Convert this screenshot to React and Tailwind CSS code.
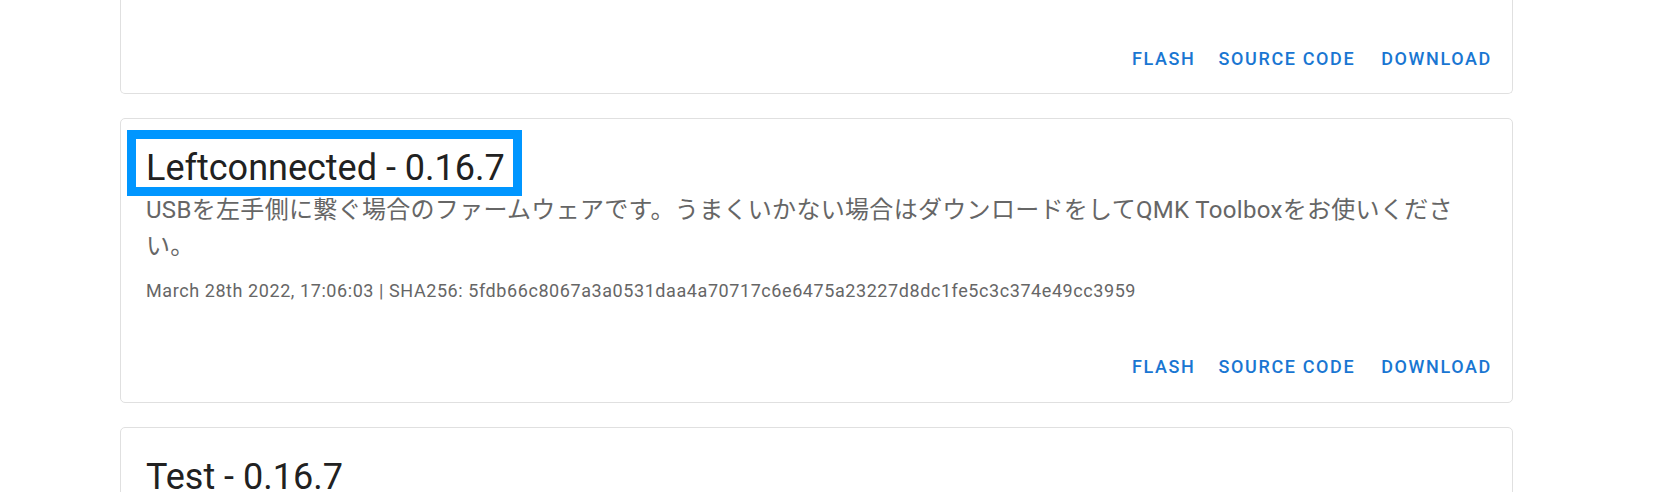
import React from "react";

const FONT = "font-['Roboto','Noto_Sans_CJK_JP',sans-serif]";

function Actions({ top, bottom }) {
  return (
    <div className={`flex justify-end pr-[20px] ${top} ${bottom}`}>
      <span className="mr-[23px] text-[18px] leading-[24px] font-medium tracking-[0.09em] text-[#1976d2]">FLASH</span>
      <span className="mr-[26px] text-[18px] leading-[24px] font-medium tracking-[0.09em] text-[#1976d2]">SOURCE CODE</span>
      <span className="text-[18px] leading-[24px] font-medium tracking-[0.09em] text-[#1976d2]">DOWNLOAD</span>
    </div>
  );
}

function Card({ title, desc, meta, highlight }) {
  return (
    <div className="relative mt-[24px] rounded-[5px] border border-[#e0e0e0] bg-white">
      {highlight && (
        <div className="pointer-events-none absolute left-[6px] top-[11px] h-[66px] w-[395px] border-[9px] border-[#0096ff]" />
      )}
      <div className="pl-[25px] pr-[44px] pt-[25px]">
        <div className="text-[36px] leading-[48px] text-[#212121]">{title}</div>
        {desc && (
          <div className="text-[24px] leading-[36px] tracking-[0.013em] text-[#666666]">{desc}</div>
        )}
        {meta && (
          <div className="mt-[15px] text-[18px] leading-[24px] tracking-[0.032em] text-[#666666]">{meta}</div>
        )}
      </div>
      <Actions top="mt-[52px]" bottom="pb-[23px]" />
    </div>
  );
}

export default function App() {
  return (
    <div className={`min-h-[492px] w-full overflow-hidden bg-white ${FONT}`}>
      <div className="ml-[120px] w-[1393px]">
        <div className="rounded-b-[5px] border-x border-b border-[#e0e0e0] bg-white">
          <Actions top="pt-[47px]" bottom="pb-[22px]" />
        </div>
        <Card
          highlight
          title="Leftconnected - 0.16.7"
          desc="USBを左手側に繋ぐ場合のファームウェアです。うまくいかない場合はダウンロードをしてQMK Toolboxをお使いください。"
          meta="March 28th 2022, 17:06:03 | SHA256: 5fdb66c8067a3a0531daa4a70717c6e6475a23227d8dc1fe5c3c374e49cc3959"
        />
        <Card title="Test - 0.16.7" />
      </div>
    </div>
  );
}
